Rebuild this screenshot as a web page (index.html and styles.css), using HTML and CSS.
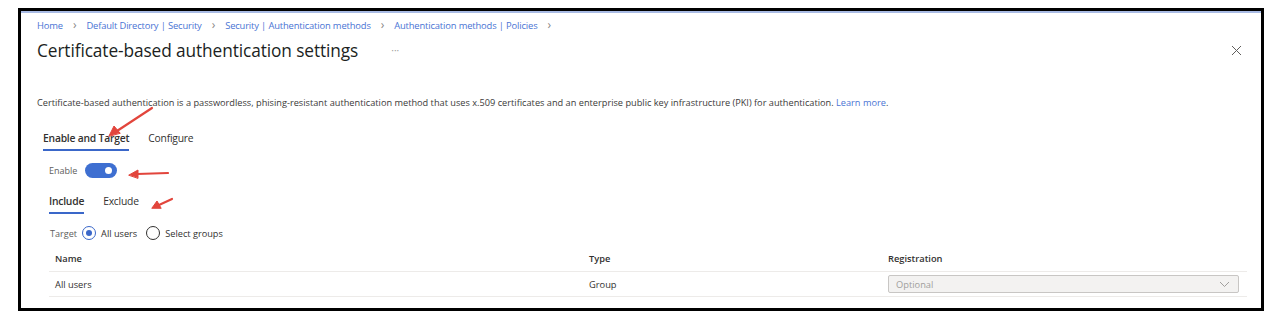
FILE: index.html
```html
<!DOCTYPE html>
<html lang="en">

<head>
    <meta charset="UTF-8" />
    <meta name="viewport" content="width=device-width, initial-scale=1.0" />
    <title>Certificate-based authentication settings</title>
    <link rel="stylesheet" href="styles.css">
</head>

<body>
    <div class="frame">
        <div class="blade">
            <nav class="crumbs">
                <a href="#">Home</a><span class="sep">&rsaquo;</span>
                <a href="#">Default Directory | Security</a><span class="sep">&rsaquo;</span>
                <a href="#">Security | Authentication methods</a><span class="sep">&rsaquo;</span>
                <a href="#">Authentication methods | Policies</a><span class="sep">&rsaquo;</span>
            </nav>

            <div class="title-row">
                <h1>Certificate-based authentication settings</h1>
                <span class="more">&middot;&middot;&middot;</span>
                <button class="close" aria-label="Close">
                    <svg width="11" height="11" viewBox="0 0 11 11">
                        <path d="M1 1 L10 10 M10 1 L1 10" stroke="#605e5c" stroke-width="1" fill="none" />
                    </svg>
                </button>
            </div>

            <p class="desc">Certificate-based authentication is a passwordless, phising-resistant authentication method that uses x.509 certificates and an enterprise public key infrastructure (PKI) for authentication. <a href="#">Learn more</a>.</p>

            <div class="tabs">
                <span class="tab active">Enable and Target</span>
                <span class="tab">Configure</span>
            </div>

            <div class="enable-row">
                <span class="label">Enable</span>
                <span class="toggle"><span class="knob"></span></span>
            </div>

            <div class="tabs sub">
                <span class="tab active">Include</span>
                <span class="tab">Exclude</span>
            </div>

            <div class="target-row">
                <span class="label">Target</span>
                <span class="radio checked"></span><span class="opt">All users</span>
                <span class="radio"></span><span class="opt">Select groups</span>
            </div>

            <div class="grid">
                <div class="row head">
                    <span>Name</span>
                    <span>Type</span>
                    <span>Registration</span>
                </div>
                <div class="row">
                    <span>All users</span>
                    <span>Group</span>
                    <span>
                        <span class="select">
                            <span>Optional</span>
                            <svg width="11" height="7" viewBox="0 0 11 7">
                                <path d="M1 1 L5.5 5.5 L10 1" stroke="#a19f9d" stroke-width="1" fill="none" />
                            </svg>
                        </span>
                    </span>
                </div>
            </div>
        </div>

        <!-- red annotation arrows drawn over the screenshot -->
        <svg class="marks" width="1282" height="330" viewBox="0 0 1282 330">
            <g stroke="#e2453c" stroke-width="2.2" fill="#e2453c" stroke-linecap="round">
                <line x1="152" y1="108" x2="117" y2="131" />
                <polygon points="109,136 114,126 120,133" stroke-width="1" />
                <line x1="168" y1="173" x2="137" y2="174" />
                <polygon points="129,175 138,170 138,178" stroke-width="1" />
                <line x1="172" y1="199" x2="159" y2="205" />
                <polygon points="152,208 157,201 161,208" stroke-width="1" />
            </g>
        </svg>
    </div>
</body>

</html>
```

FILE: styles.css
```css
:root {
    --text: #323130;
    --muted: #605e5c;
    --link: #4a74d4;
    --accent: #3a67c9;
    --line: #edebe9;
}

* {
    margin: 0;
    padding: 0;
    box-sizing: border-box;
}

body {
    font-family: 'Open Sans', 'Noto Sans', sans-serif;
    background-color: #ffffff;
    color: var(--text);
}

.frame {
    position: relative;
    width: 1246px;
    height: 303px;
    margin: 8px 0 0 18px;
    border: 3px solid #000000;
}

.blade {
    height: 100%;
    border-top: 2px solid #a9bbe4;
    padding: 5px 19px 0 16px;
}

.crumbs {
    display: flex;
    align-items: center;
    height: 14px;
    font-size: 9.4px;
    letter-spacing: -0.15px;
}

.crumbs a {
    color: var(--link);
    text-decoration: none;
}

.crumbs .sep {
    color: #8a8886;
    font-size: 12px;
    margin: -2px 10px 0 10px;
}

.title-row {
    display: flex;
    align-items: center;
    height: 28px;
    margin-top: 4px;
}

h1 {
    font-size: 17.3px;
    font-weight: 400;
    letter-spacing: -0.1px;
    color: #201f1e;
}

.more {
    color: #a19f9d;
    font-size: 10px;
    margin-left: 33px;
}

.close {
    margin-left: auto;
    background: none;
    border: none;
    width: 11px;
    height: 11px;
    display: flex;
}

.desc {
    margin-top: 32px;
    line-height: 14px;
    font-size: 9.21px;
    color: #3b3a39;
}

.desc a {
    color: var(--link);
    text-decoration: none;
}

.tabs {
    display: flex;
    gap: 19px;
    margin: 20px 0 0 6px;
}

.tab {
    font-size: 10.3px;
    line-height: 16px;
    padding-bottom: 3px;
    border-bottom: 2px solid transparent;
    color: var(--text);
    letter-spacing: -0.2px;
}

.tab.active {
    font-weight: 600;
    border-bottom-color: var(--accent);
}

.tabs.sub {
    margin: 15px 0 0 12px;
}

.enable-row {
    display: flex;
    align-items: center;
    gap: 8px;
    height: 16px;
    margin: 11px 0 0 12px;
}

.label {
    font-size: 9px;
    color: var(--muted);
}

.toggle {
    width: 32px;
    height: 15px;
    border-radius: 8px;
    background-color: #3e6fd1;
    display: flex;
    align-items: center;
    justify-content: flex-end;
    padding-right: 5px;
}

.knob {
    width: 7px;
    height: 7px;
    border-radius: 50%;
    background-color: #ffffff;
}

.target-row {
    display: flex;
    align-items: center;
    height: 16px;
    margin: 11px 0 0 13px;
}

.target-row .label {
    font-size: 9.1px;
    margin-right: 5px;
}

.radio {
    width: 14px;
    height: 14px;
    border-radius: 50%;
    border: 1px solid #323130;
    display: flex;
    align-items: center;
    justify-content: center;
    margin-right: 5px;
}

.radio.checked {
    border-color: var(--accent);
}

.radio.checked::after {
    content: "";
    width: 6px;
    height: 6px;
    border-radius: 50%;
    background-color: var(--accent);
}

.opt {
    font-size: 9.2px;
    color: var(--text);
    margin-right: 9px;
}

.grid {
    margin: 5px 0 0 12px;
    width: 1198px;
}

.row {
    display: grid;
    grid-template-columns: 534px 299px 365px;
    align-items: center;
    height: 25px;
    border-bottom: 1px solid var(--line);
    font-size: 9.3px;
}

.row.head {
    height: 26px;
    font-weight: 600;
}

.row > span {
    padding-left: 6px;
}

.select {
    display: flex;
    align-items: center;
    justify-content: space-between;
    width: 351px;
    height: 18px;
    padding: 0 8px 0 7px;
    background-color: #f3f2f1;
    border: 1px solid #c8c6c4;
    border-radius: 2px;
    color: #a19f9d;
}

.marks {
    position: absolute;
    left: -21px;
    top: -11px;
    pointer-events: none;
}
```
